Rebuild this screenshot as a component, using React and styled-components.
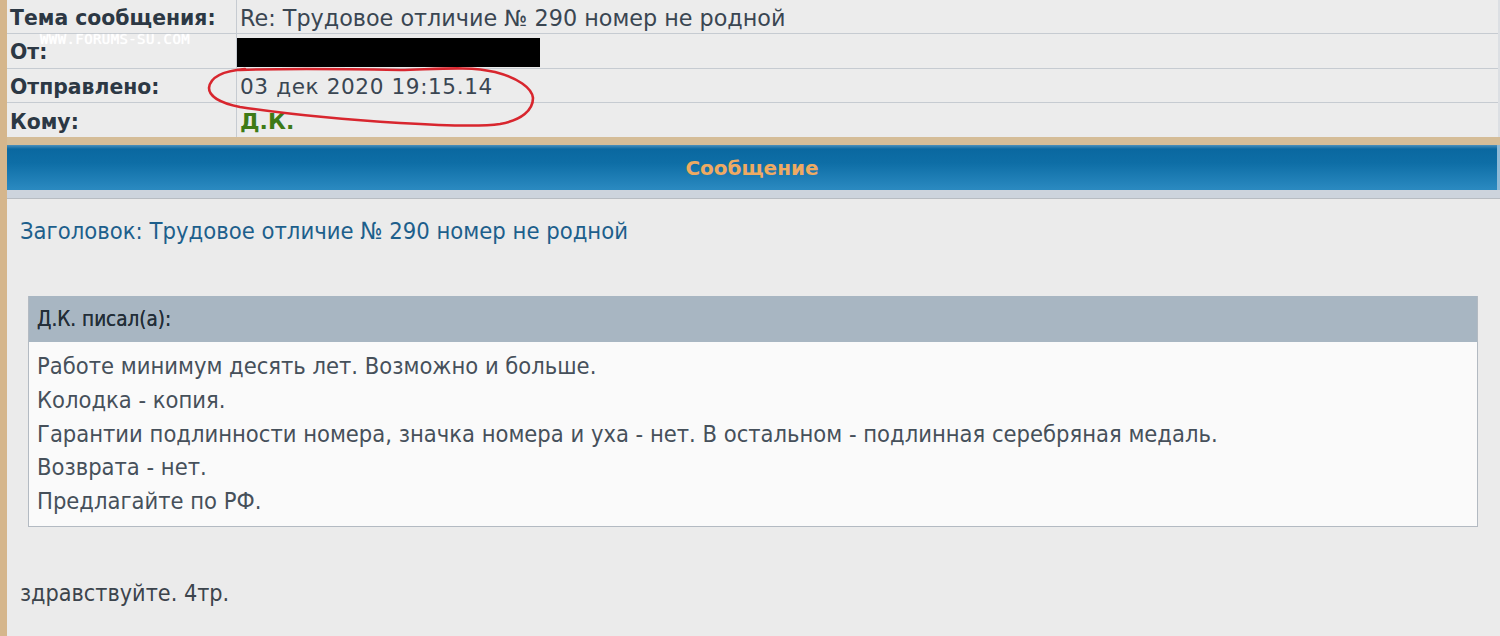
import React from 'react';
import styled, { createGlobalStyle } from 'styled-components';

const GlobalStyle = createGlobalStyle`
    html, body {
        margin: 0;
        padding: 0;
        background: #ebebeb;
    }
    body {
        font-family: "DejaVu Sans", Verdana, sans-serif;
        overflow: hidden;
    }
`;

const Page = styled.div`
    width: 1500px;
    height: 636px;
    display: flex;
    background: #ebebeb;
    position: relative;
    overflow: hidden;
`;

const Frame = styled.div`
    width: 7px;
    flex-shrink: 0;
    background: #d5b68c;
`;

const Main = styled.div`
    flex: 1;
    display: flex;
    flex-direction: column;
`;

const InfoTable = styled.div`
    display: grid;
    grid-template-columns: 230px 1fr;
    grid-auto-rows: 34.3px;
    background: #ececec;
    border-right: 2px solid #dcdfe3;
`;

const Label = styled.div`
    box-sizing: border-box;
    display: flex;
    align-items: center;
    padding: 3px 0 0 3px;
    border-bottom: ${p => (p.last ? 'none' : '1px solid #c6cbd1')};
    border-right: 1px solid #c6cbd1;
    font-weight: bold;
    font-size: 20.4px;
    color: #2c3844;
`;

const Value = styled.div`
    box-sizing: border-box;
    display: flex;
    align-items: center;
    padding: 3px 0 0 3px;
    border-bottom: ${p => (p.last ? 'none' : '1px solid #c6cbd1')};
    font-size: ${p => p.size || '22.3px'};
    letter-spacing: ${p => p.spacing || 'normal'};
    font-weight: ${p => (p.bold ? 'bold' : 'normal')};
    color: ${p => (p.bold ? '#3e7a16' : '#3a4652')};
`;

const Redacted = styled.div`
    width: 303px;
    height: 29px;
    margin: 1px 0 0 -3px;
    background: #000;
`;

const TanBand = styled.div`
    height: 8px;
    background: #d5bd98;
`;

const HeaderBar = styled.div`
    height: 45px;
    display: flex;
    align-items: center;
    justify-content: center;
    background: linear-gradient(#4c90bb 0px, #0a68a0 4px, #0e6ea6 18px, #2a89c0 44px);
    border-right: 3px solid #8fbad6;
    color: #eeaa62;
    font-weight: bold;
    font-size: 20px;
`;

const HeaderShadow = styled.div`
    height: 8px;
    background: #cdd4dd;
    border-bottom: 1px solid #b7bcc2;
`;

const Body = styled.div`
    padding: 17px 15px 0 13px;
    display: flex;
    flex-direction: column;
    font-family: "DejaVu Sans Condensed", "DejaVu Sans", sans-serif;
`;

const Subject = styled.div`
    font-size: 23.6px;
    color: #1d5f8c;
    line-height: 30px;
`;

const Quote = styled.div`
    margin: 50px 0 0 8px;
    width: 1448px;
    border: 1px solid #b3bac2;
    border-top: none;
    background: #fafafa;
`;

const QuoteHead = styled.div`
    height: 46px;
    display: flex;
    align-items: center;
    padding-left: 8px;
    background: #a8b6c2;
    font-size: 20.5px;
    color: #232e38;
    text-shadow: 0 0 0.4px #232e38;
`;

const QuoteBody = styled.div`
    padding: 8px 8px 7px 8px;
    font-size: 23.5px;
    line-height: 33.7px;
    color: #46505a;
`;

const Reply = styled.div`
    margin-top: 51px;
    font-size: 23.2px;
    line-height: 30px;
    color: #3c444c;
`;

const Watermark = styled.div`
    position: absolute;
    left: 40px;
    top: 31px;
    font-family: "DejaVu Sans Mono", monospace;
    font-size: 14px;
    color: #ffffff;
    letter-spacing: 0.4px;
    text-shadow: 0 0 1px #ffffff;
`;

const Scribble = styled.svg`
    position: absolute;
    left: 200px;
    top: 60px;
    pointer-events: none;
`;

const quoteLines = [
    'Работе минимум десять лет. Возможно и больше.',
    'Колодка - копия.',
    'Гарантии подлинности номера, значка номера и уха - нет. В остальном - подлинная серебряная медаль.',
    'Возврата - нет.',
    'Предлагайте по РФ.',
];

export default function App() {
    return (
        <Page>
            <GlobalStyle />
            <Frame />
            <Main>
                <InfoTable>
                    <Label>Тема сообщения:</Label>
                    <Value>Re: Трудовое отличие № 290 номер не родной</Value>
                    <Label>От:</Label>
                    <Value><Redacted /></Value>
                    <Label>Отправлено:</Label>
                    <Value size="21.6px" spacing="0.6px">03 дек 2020 19:15.14</Value>
                    <Label last>Кому:</Label>
                    <Value bold last size="22px">Д.К.</Value>
                </InfoTable>
                <TanBand />
                <HeaderBar>Сообщение</HeaderBar>
                <HeaderShadow />
                <Body>
                    <Subject>Заголовок: Трудовое отличие № 290 номер не родной</Subject>
                    <Quote>
                        <QuoteHead>Д.К. писал(а):</QuoteHead>
                        <QuoteBody>
                            {quoteLines.map((line, i) => (
                                <div key={i}>{line}</div>
                            ))}
                        </QuoteBody>
                    </Quote>
                    <Reply>здравствуйте. 4тр.</Reply>
                </Body>
            </Main>
            <Watermark>WWW.FORUMS-SU.COM</Watermark>
            <Scribble width="345" height="72" viewBox="0 0 345 72">
                <path
                    d="M40 10 C90 8 150 9 200 10 C240 9 270 6 295 12 C318 18 332 28 333 38 C333 50 322 60 300 64 C280 67 250 66 200 63 C150 60 100 56 40 47 C20 43 9 36 9 28 C10 18 22 11 45 9"
                    fill="none"
                    stroke="#d8262e"
                    strokeWidth="2.6"
                    strokeLinecap="round"
                    strokeLinejoin="round"
                />
            </Scribble>
        </Page>
    );
}
